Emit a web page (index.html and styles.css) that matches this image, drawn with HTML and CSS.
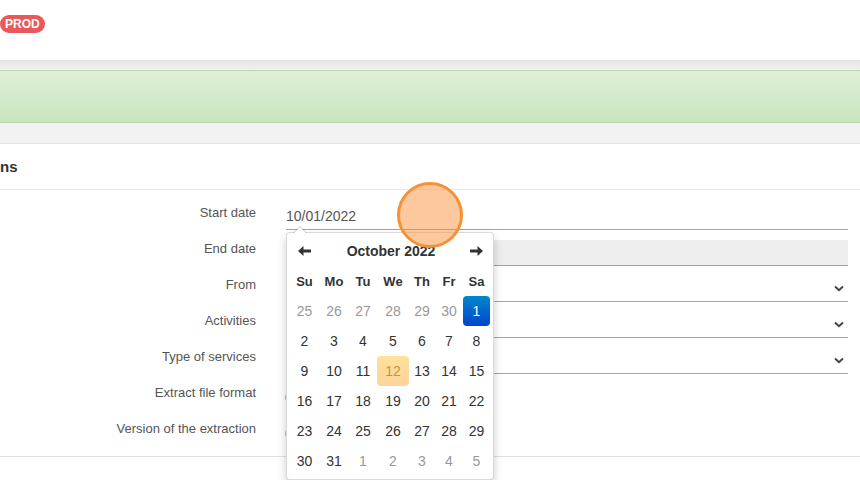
FILE: index.html
```html
<!DOCTYPE html>
<html>
<head>
    <meta charset="utf-8">
    <link rel="stylesheet" href="styles.css">
</head>
<body>
    <div class="topbar">
        <span class="badge">PROD</span>
    </div>

    <div class="main">
        <div class="alert"></div>

        <div class="panel">
            <div class="panel-head">
                <h3>ns</h3>
            </div>

            <div class="form">
                <div class="row">
                    <label>Start date</label>
                    <div class="field">10/01/2022</div>
                </div>
                <div class="row">
                    <label>End date</label>
                    <div class="field field-disabled"></div>
                </div>
                <div class="row">
                    <label>From</label>
                    <div class="field field-select">
                        <span></span>
                        <svg class="chevron" width="10" height="7" viewBox="0 0 10 7"><path d="M1 1.5 L5 5.2 L9 1.5" fill="none" stroke="#444" stroke-width="2"/></svg>
                    </div>
                </div>
                <div class="row">
                    <label>Activities</label>
                    <div class="field field-select">
                        <span></span>
                        <svg class="chevron" width="10" height="7" viewBox="0 0 10 7"><path d="M1 1.5 L5 5.2 L9 1.5" fill="none" stroke="#444" stroke-width="2"/></svg>
                    </div>
                </div>
                <div class="row">
                    <label>Type of services</label>
                    <div class="field field-select">
                        <span></span>
                        <svg class="chevron" width="10" height="7" viewBox="0 0 10 7"><path d="M1 1.5 L5 5.2 L9 1.5" fill="none" stroke="#444" stroke-width="2"/></svg>
                    </div>
                </div>
                <div class="row">
                    <label>Extract file format</label>
                    <div class="field field-radio"><span class="radio"></span></div>
                </div>
                <div class="row">
                    <label>Version of the extraction</label>
                    <div class="field field-radio"><span class="radio"></span></div>
                </div>
            </div>

            <div class="panel-foot"></div>
        </div>
    </div>

    <!-- date picker opened on the start date -->
    <div class="datepicker">
        <div class="dp-grid">
            <span class="dp-nav">
                <svg width="13" height="10" viewBox="0 0 13 10"><path d="M0 5 L5.5 0 L5.5 3.6 L13 3.6 L13 6.4 L5.5 6.4 L5.5 10 Z" fill="#333"/></svg>
            </span>
            <span class="dp-title">October 2022</span>
            <span class="dp-nav">
                <svg width="13" height="10" viewBox="0 0 13 10"><path d="M13 5 L7.5 0 L7.5 3.6 L0 3.6 L0 6.4 L7.5 6.4 L7.5 10 Z" fill="#333"/></svg>
            </span>

            <span class="dow">Su</span><span class="dow">Mo</span><span class="dow">Tu</span><span class="dow">We</span><span class="dow">Th</span><span class="dow">Fr</span><span class="dow">Sa</span>

            <span class="day old">25</span><span class="day old">26</span><span class="day old">27</span><span class="day old">28</span><span class="day old">29</span><span class="day old">30</span><span class="day active">1</span>
            <span class="day">2</span><span class="day">3</span><span class="day">4</span><span class="day">5</span><span class="day">6</span><span class="day">7</span><span class="day">8</span>
            <span class="day">9</span><span class="day">10</span><span class="day">11</span><span class="day today">12</span><span class="day">13</span><span class="day">14</span><span class="day">15</span>
            <span class="day">16</span><span class="day">17</span><span class="day">18</span><span class="day">19</span><span class="day">20</span><span class="day">21</span><span class="day">22</span>
            <span class="day">23</span><span class="day">24</span><span class="day">25</span><span class="day">26</span><span class="day">27</span><span class="day">28</span><span class="day">29</span>
            <span class="day">30</span><span class="day">31</span><span class="day old">1</span><span class="day old">2</span><span class="day old">3</span><span class="day old">4</span><span class="day old">5</span>
        </div>
    </div>

    <div class="click-dot"></div>
</body>
</html>
```

FILE: styles.css
```css
html, body {
    height: 480px;
    overflow: hidden;
}

body {
    margin: 0;
    font-family: 'Liberation Sans', Arial, sans-serif;
    background: #f2f2f2;
    color: #333;
}

.topbar {
    height: 60px;
    padding-top: 14px;
    box-sizing: border-box;
    background: white;
}

.badge {
    display: inline-block;
    height: 18px;
    line-height: 18px;
    padding: 0 5px;
    border-radius: 9px;
    background: #e9585a;
    color: white;
    font-size: 12px;
    font-weight: bold;
}

.main {
    padding-top: 10px;
    background: linear-gradient(#e4e4e4, #f2f2f2 10px) no-repeat;
    background-color: #f2f2f2;
}

.alert {
    height: 51px;
    border-top: 1px solid #b9d6ad;
    border-bottom: 1px solid #b9d6ad;
    background: linear-gradient(#dff0d8, #c8e5bc);
    margin-bottom: 20px;
}

.panel {
    background: white;
    border-top: 1px solid #e6e6e6;
}

.panel-head {
    height: 45px;
    border-bottom: 1px solid #e8e8e8;
}

.panel-head h3 {
    margin: 0;
    line-height: 45px;
    font-size: 15px;
    font-weight: bold;
    color: #333;
}

.form {
    padding: 4px 12px 10px 0;
}

.row {
    display: grid;
    grid-template-columns: 256px 1fr;
    column-gap: 30px;
    padding-top: 10px;
}

.row label {
    text-align: right;
    font-size: 13px;
    line-height: 18px;
    color: #555;
}

.field {
    height: 26px;
    box-sizing: border-box;
    border-bottom: 1px solid #a3a3a3;
    font-size: 14px;
    line-height: 25px;
    color: #555;
}

.field-disabled {
    background: #eee;
}

.field-select {
    display: flex;
    align-items: center;
    justify-content: space-between;
}

.chevron {
    margin-right: 4px;
}

.field-radio {
    border-bottom: none;
    display: flex;
    align-items: center;
}

.radio {
    width: 13px;
    height: 13px;
    margin-left: -1px;
    box-sizing: border-box;
    border: 1px solid #dcb060;
    border-radius: 50%;
}

.panel-foot {
    height: 40px;
    border-top: 1px solid #e0e0e0;
}

/* datepicker */
.datepicker {
    position: absolute;
    left: 286px;
    top: 232px;
    width: 208px;
    box-sizing: border-box;
    padding: 3px;
    background: white;
    border: 1px solid rgba(0, 0, 0, 0.15);
    border-radius: 4px;
    box-shadow: 0 5px 10px rgba(0, 0, 0, 0.2);
}

.datepicker::before {
    content: '';
    position: absolute;
    left: 6px;
    top: -7px;
    border-left: 7px solid transparent;
    border-right: 7px solid transparent;
    border-bottom: 7px solid rgba(0, 0, 0, 0.18);
}

.datepicker::after {
    content: '';
    position: absolute;
    left: 7px;
    top: -6px;
    border-left: 6px solid transparent;
    border-right: 6px solid transparent;
    border-bottom: 6px solid white;
}

.dp-grid {
    display: grid;
    grid-template-columns: 29px 30px 28px 32px 26px 28px 27px;
    grid-auto-rows: 30px;
}

.dp-grid span {
    display: flex;
    align-items: center;
    justify-content: center;
    border-radius: 4px;
}

.dp-title {
    grid-column: span 5;
    font-size: 14px;
    font-weight: bold;
}

.dow {
    font-size: 13px;
    font-weight: bold;
}

.day {
    font-size: 14px;
    color: #333;
}

.day.old {
    color: #999;
}

.day.active {
    background: linear-gradient(#0088cc, #0044cc);
    color: white;
}

.day.today {
    background: linear-gradient(#fde19a, #fdd49a);
    color: #c4953c;
}

.click-dot {
    position: absolute;
    left: 397px;
    top: 182px;
    width: 66px;
    height: 66px;
    box-sizing: border-box;
    border: 3px solid #f39237;
    border-radius: 50%;
    background: rgba(251, 146, 60, 0.5);
}
```
